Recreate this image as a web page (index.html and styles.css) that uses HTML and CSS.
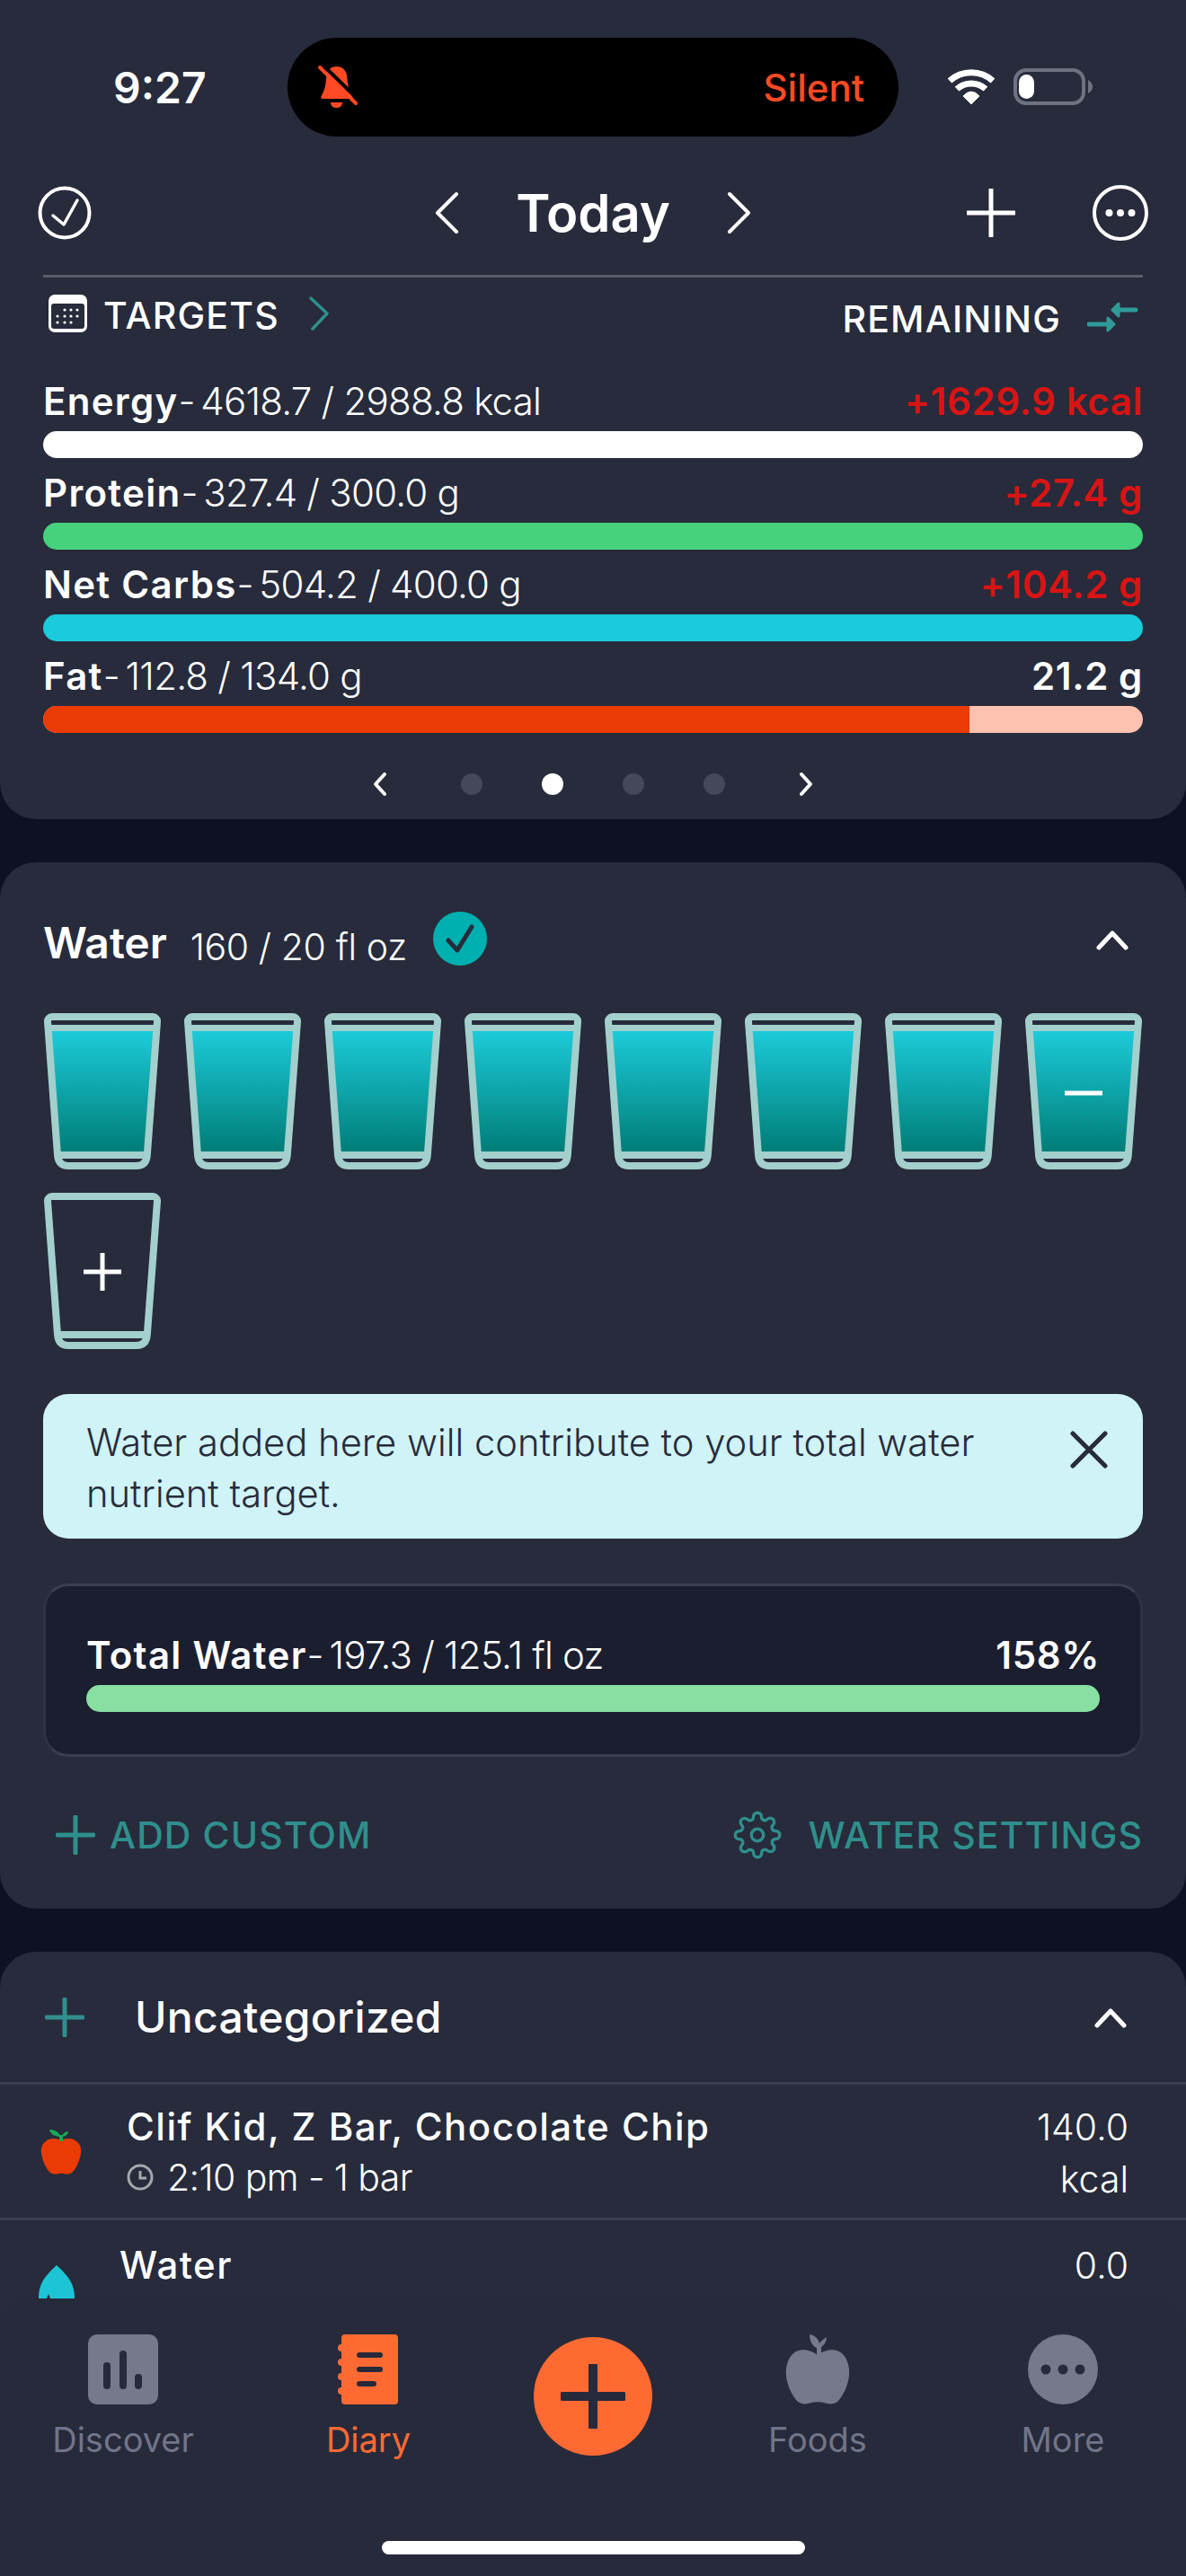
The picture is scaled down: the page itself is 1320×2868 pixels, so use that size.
FILE: index.html
```html
<!DOCTYPE html>
<html lang="en">
<head>
    <meta charset="UTF-8">
    <meta name="viewport" content="width=device-width, initial-scale=1.0">
    <title>Diary</title>
    <link rel="stylesheet" href="styles.css">
</head>
<body>
    <svg class="defs" width="0" height="0">
        <defs>
            <linearGradient id="water-fill" x1="0" y1="0" x2="0" y2="1">
                <stop offset="0" stop-color="#1ccbd9"/>
                <stop offset="1" stop-color="#007d78"/>
            </linearGradient>
            <symbol id="glass-empty" viewBox="0 0 130 174">
                <path d="M9 4H121a5 5 0 0 1 5 5.400L114.800 158q-.9 12-12 12H27q-11 0-12-12L4 9.400A5 5 0 0 1 9 4Z" fill="none" stroke="#a3cfcc" stroke-width="8" stroke-linejoin="round"/>
                <path d="M15 158H115" stroke="#a3cfcc" stroke-width="8"/>
            </symbol>
            <symbol id="glass-full" viewBox="0 0 130 174">
                <path d="M8 20H122L112 154H18Z" fill="url(#water-fill)"/>
                <path d="M5 16.500H125" stroke="#a3cfcc" stroke-width="7"/>
                <use href="#glass-empty" width="130" height="174"/>
            </symbol>
        </defs>
    </svg>

    <div class="phone">
        <section class="card card-targets">
            <div class="status-bar">
                <span class="clock">9:27</span>
                <div class="island">
                    <svg class="bell" width="46" height="48" viewBox="0 0 46 48">
                        <path d="M21.500 1c-6 0-10 4-11 10-1 8-1 15-6 23-1 2 0 3 2 3H37c2 0 3-1 2-3-5-8-5-15-6-23-1-6-5-10-11.500-10Z" fill="#ff4a23"/>
                        <path d="M15 41h13c0 4-3 6-6.500 6S15 45 15 41Z" fill="#ff4a23"/>
                        <path d="M6 -1 47 39" stroke="#000" stroke-width="4"/>
                        <path d="M3 2 43 42" stroke="#ff4a23" stroke-width="4" stroke-linecap="round"/>
                    </svg>
                    <span class="silent">Silent</span>
                </div>
                <div class="status-icons">
                    <svg width="56" height="40" viewBox="0 0 56 40">
                        <path d="M27 39 18 30Q27 20 36 30Z" fill="#fff" stroke="#fff" stroke-linejoin="round"/>
                        <path d="M11 22A24 24 0 0 1 43 22" fill="none" stroke="#fff" stroke-width="7"/>
                        <path d="M3 13A36 36 0 0 1 51 13" fill="none" stroke="#fff" stroke-width="7"/>
                    </svg>
                    <svg class="battery" width="88" height="42" viewBox="0 0 88 42">
                        <rect x="2" y="2" width="76" height="37" rx="12" fill="none" stroke="#6f7280" stroke-width="4"/>
                        <rect x="6" y="7" width="17" height="27" rx="8.500" fill="#fff"/>
                        <path d="M83 13q5 3 5 7.500t-5 7.500Z" fill="#6f7280"/>
                    </svg>
                </div>
            </div>

            <div class="day-nav">
                <svg class="day-done" width="60" height="60" viewBox="0 0 60 60">
                    <circle cx="30" cy="30" r="27.500" fill="none" stroke="#fff" stroke-width="4"/>
                    <path d="M17 33l12 10 15-27" fill="none" stroke="#fff" stroke-width="3.500" stroke-linecap="round" stroke-linejoin="round"/>
                </svg>
                <div class="day-picker">
                    <svg width="28" height="48" viewBox="0 0 28 48"><path d="M25 3 4 24l21 21" fill="none" stroke="#fff" stroke-width="4" stroke-linecap="round" stroke-linejoin="round"/></svg>
                    <h1>Today</h1>
                    <svg width="28" height="48" viewBox="0 0 28 48"><path d="M3 3l21 21L3 45" fill="none" stroke="#fff" stroke-width="4" stroke-linecap="round" stroke-linejoin="round"/></svg>
                </div>
                <div class="day-actions">
                    <svg width="54" height="54" viewBox="0 0 54 54"><path d="M27 1v52M1 27h52" stroke="#fff" stroke-width="5" stroke-linecap="round"/></svg>
                    <svg width="62" height="62" viewBox="0 0 62 62">
                        <circle cx="31" cy="31" r="29" fill="none" stroke="#fff" stroke-width="4"/>
                        <circle cx="18.500" cy="31" r="4" fill="#fff"/><circle cx="31" cy="31" r="4" fill="#fff"/><circle cx="43.500" cy="31" r="4" fill="#fff"/>
                    </svg>
                </div>
            </div>

            <div class="targets-head">
                <div class="targets-link">
                    <svg class="calendar" width="44" height="42" viewBox="0 0 44 42">
                        <rect width="43" height="42" rx="7" fill="#fff"/>
                        <rect x="3" y="10" width="37" height="28" rx="3" fill="#272b3b"/>
                        <g fill="#fff">
                            <circle cx="18" cy="17" r="1.600"/><circle cx="25" cy="17" r="1.600"/><circle cx="32" cy="17" r="1.600"/>
                            <circle cx="10" cy="24" r="1.600"/><circle cx="18" cy="24" r="1.600"/><circle cx="25" cy="24" r="1.600"/><circle cx="32" cy="24" r="1.600"/>
                            <circle cx="10" cy="31" r="1.600"/><circle cx="18" cy="31" r="1.600"/><circle cx="25" cy="31" r="1.600"/>
                        </g>
                    </svg>
                    <span class="caps-label">TARGETS</span>
                    <svg class="targets-chevron" width="24" height="38" viewBox="0 0 24 38"><path d="M3 2l18 17L5 36" fill="none" stroke="#2f8f8c" stroke-width="3.500" stroke-linecap="round" stroke-linejoin="round"/></svg>
                </div>
                <div class="remaining-link">
                    <span class="caps-label">REMAINING</span>
                    <svg class="swap" width="58" height="38" viewBox="0 0 58 38">
                        <path d="M54 11H35M2 27h20" stroke="#2f9b98" stroke-width="5" stroke-linecap="round"/>
                        <path d="M28 11 35 4v14ZM30 27 23 20v14Z" fill="#2f9b98" stroke="#2f9b98" stroke-width="3" stroke-linejoin="round"/>
                    </svg>
                </div>
            </div>

            <div class="macro">
                <div class="macro-head"><span><b>Energy</b><i>- </i>4618.7 / 2988.8 kcal</span><b class="over">+1629.9 kcal</b></div>
                <div class="bar bar-white"></div>
            </div>
            <div class="macro">
                <div class="macro-head"><span><b>Protein</b><i>- </i>327.4 / 300.0 g</span><b class="over">+27.4 g</b></div>
                <div class="bar bar-green"></div>
            </div>
            <div class="macro">
                <div class="macro-head"><span><b>Net Carbs</b><i>- </i>504.2 / 400.0 g</span><b class="over">+104.2 g</b></div>
                <div class="bar bar-cyan"></div>
            </div>
            <div class="macro">
                <div class="macro-head"><span><b>Fat</b><i>- </i>112.8 / 134.0 g</span><b>21.2 g</b></div>
                <div class="bar bar-peach"><div class="bar-part" style="width: 84.2%"></div></div>
            </div>

            <div class="pager">
                <svg width="18" height="28" viewBox="0 0 18 28"><path d="M14 3 4 14l10 11" fill="none" stroke="#fff" stroke-width="4" stroke-linecap="round" stroke-linejoin="round"/></svg>
                <span class="dot"></span>
                <span class="dot dot-on"></span>
                <span class="dot"></span>
                <span class="dot"></span>
                <svg width="18" height="28" viewBox="0 0 18 28"><path d="M4 3l10 11L4 25" fill="none" stroke="#fff" stroke-width="4" stroke-linecap="round" stroke-linejoin="round"/></svg>
            </div>
        </section>

        <section class="card card-water">
            <div class="water-head">
                <h2>Water</h2>
                <span class="water-amount">160 / 20 fl oz</span>
                <svg class="water-check" width="60" height="60" viewBox="0 0 60 60">
                    <circle cx="30" cy="30" r="30" fill="#00b0b0"/>
                    <path d="M17 32l10 11 16-26" fill="none" stroke="#272b3b" stroke-width="5" stroke-linecap="round" stroke-linejoin="round"/>
                </svg>
                <svg class="chevron-up" width="36" height="24" viewBox="0 0 36 24"><path d="M3 21 18 5l15 16" fill="none" stroke="#fff" stroke-width="5" stroke-linecap="round" stroke-linejoin="round"/></svg>
            </div>

            <div class="glasses">
                <svg class="glass"><use href="#glass-full"/></svg>
                <svg class="glass"><use href="#glass-full"/></svg>
                <svg class="glass"><use href="#glass-full"/></svg>
                <svg class="glass"><use href="#glass-full"/></svg>
                <svg class="glass"><use href="#glass-full"/></svg>
                <svg class="glass"><use href="#glass-full"/></svg>
                <svg class="glass"><use href="#glass-full"/></svg>
                <svg class="glass" viewBox="0 0 130 174"><use href="#glass-full" width="130" height="174"/><path d="M44 89H86" stroke="#fff" stroke-width="5"/></svg>
                <svg class="glass" viewBox="0 0 130 174"><use href="#glass-empty" width="130" height="174"/><path d="M44 88H86M65 67v42" stroke="#fff" stroke-width="5"/></svg>
            </div>

            <div class="banner">
                <p>Water added here will contribute to your total water nutrient target.</p>
                <svg width="42" height="42" viewBox="0 0 42 42"><path d="M3 3l36 36M39 3 3 39" stroke="#272b3b" stroke-width="5" stroke-linecap="round"/></svg>
            </div>

            <div class="total-box">
                <div class="macro-head"><span><b>Total Water</b><i>- </i>197.3 / 125.1 fl oz</span><b>158%</b></div>
                <div class="bar bar-mint"></div>
            </div>

            <div class="water-actions">
                <div class="action">
                    <svg width="44" height="44" viewBox="0 0 44 44"><path d="M22 2v40M2 22h40" stroke="#2f8f8c" stroke-width="5" stroke-linecap="round"/></svg>
                    <span>ADD CUSTOM</span>
                </div>
                <div class="action action-settings">
                    <svg width="54" height="54" viewBox="0 0 24 24" fill="none" stroke="#2f8f8c" stroke-width="1.500">
                        <circle cx="12" cy="12" r="3"/>
                        <path d="M19.4 15a1.65 1.65 0 0 0 .33 1.82l.06.06a2 2 0 0 1 0 2.83 2 2 0 0 1-2.83 0l-.06-.06a1.65 1.65 0 0 0-1.82-.33 1.65 1.65 0 0 0-1 1.51V21a2 2 0 0 1-2 2 2 2 0 0 1-2-2v-.09A1.65 1.65 0 0 0 9 19.4a1.65 1.65 0 0 0-1.82.33l-.06.06a2 2 0 0 1-2.83 0 2 2 0 0 1 0-2.83l.06-.06a1.65 1.65 0 0 0 .33-1.82 1.65 1.65 0 0 0-1.51-1H3a2 2 0 0 1-2-2 2 2 0 0 1 2-2h.09A1.65 1.65 0 0 0 4.600 9a1.65 1.65 0 0 0-.33-1.82l-.06-.06a2 2 0 0 1 0-2.83 2 2 0 0 1 2.83 0l.06.06a1.65 1.65 0 0 0 1.82.33H9a1.65 1.65 0 0 0 1-1.51V3a2 2 0 0 1 2-2 2 2 0 0 1 2 2v.09a1.65 1.65 0 0 0 1 1.51 1.65 1.65 0 0 0 1.82-.33l.06-.06a2 2 0 0 1 2.83 0 2 2 0 0 1 0 2.83l-.06.06a1.65 1.65 0 0 0-.33 1.82V9a1.65 1.65 0 0 0 1.51 1H21a2 2 0 0 1 2 2 2 2 0 0 1-2 2h-.09a1.65 1.65 0 0 0-1.51 1z"/>
                    </svg>
                    <span>WATER SETTINGS</span>
                </div>
            </div>
        </section>

        <section class="card card-diary">
            <div class="diary-head">
                <svg width="44" height="44" viewBox="0 0 44 44"><path d="M22 2v40M2 22h40" stroke="#2f8f8c" stroke-width="5" stroke-linecap="round"/></svg>
                <h2>Uncategorized</h2>
                <svg class="chevron-up" width="36" height="24" viewBox="0 0 36 24"><path d="M3 21 18 5l15 16" fill="none" stroke="#fff" stroke-width="5" stroke-linecap="round" stroke-linejoin="round"/></svg>
            </div>
            <div class="entry">
                <svg class="entry-icon" width="46" height="50" viewBox="0 0 46 50">
                    <path d="M23 12c-4-2-9-3-14-1C3 14 0 19 1 26c1 8 5 17 9 21 3 3 8 3 10 2 2-.7 4-.7 6 0 2 1 7 1 10-2 4-4 8-13 9-21 1-7-2-12-8-15-5-2-10-1-14 1Z" fill="#eb3b04"/>
                    <path d="M23 13V6" stroke="#18a957" stroke-width="4"/>
                    <path d="M23 8C20 2 15 0 10 0c1 5 6 8 13 8ZM23 8c2-4 5-6 8-6 0 3-3 6-8 6Z" fill="#18a957"/>
                </svg>
                <div class="entry-text">
                    <div class="entry-name">Clif Kid, Z Bar, Chocolate Chip</div>
                    <div class="entry-meta">
                        <svg width="30" height="30" viewBox="0 0 30 30"><circle cx="15" cy="15" r="13" fill="none" stroke="#a5a7ac" stroke-width="3"/><path d="M15 8v8h7" fill="none" stroke="#a5a7ac" stroke-width="3"/></svg>
                        <span>2:10 pm - 1 bar</span>
                    </div>
                </div>
                <div class="entry-cal">140.0<br>kcal</div>
            </div>
            <div class="entry entry-water">
                <svg class="entry-icon" width="42" height="56" viewBox="0 0 42 56">
                    <path d="M21 0C13 8 1 17 1 36c0 12 9 20 20 20s20-8 20-20C41 17 29 8 21 0Z" fill="#1cc4d6"/>
                    <path d="M10 37l2-5 2 5" fill="#272b3b"/>
                </svg>
                <div class="entry-text">
                    <div class="entry-name">Water</div>
                </div>
                <div class="entry-cal">0.0</div>
            </div>
        </section>

        <nav class="tabbar">
            <div class="tabs">
                <div class="tab">
                    <svg width="78" height="78" viewBox="0 0 78 78">
                        <rect width="78" height="78" rx="10" fill="#75798a"/>
                        <path d="M21 35v22M39 22v35M56 48v9" stroke="#272a3a" stroke-width="8" stroke-linecap="round"/>
                    </svg>
                    <span>Discover</span>
                </div>
                <div class="tab tab-on">
                    <svg width="68" height="78" viewBox="0 0 68 78">
                        <path d="M4 4a4 4 0 0 1 4-4h55a4 4 0 0 1 4 4v70a4 4 0 0 1-4 4H8a4 4 0 0 1-4-4Z" fill="#ff6a33"/>
                        <circle cx="4" cy="15" r="4" fill="#ff6a33"/><circle cx="4" cy="31" r="4" fill="#ff6a33"/><circle cx="4" cy="47" r="4" fill="#ff6a33"/><circle cx="4" cy="63" r="4" fill="#ff6a33"/>
                        <path d="M24 23h23M24 39h23M24 55h16" stroke="#272a3a" stroke-width="6" stroke-linecap="round"/>
                    </svg>
                    <span>Diary</span>
                </div>
                <div class="tab">
                    <div class="fab">
                        <svg width="72" height="72" viewBox="0 0 72 72"><path d="M36 2v68M2 36h68" stroke="#272a3a" stroke-width="10" stroke-linecap="round"/></svg>
                    </div>
                </div>
                <div class="tab">
                    <svg width="72" height="78" viewBox="0 0 72 78">
                        <path d="M36 23c-6-5-16-8-24-4C3 24 0 36 1 46c1 11 7 23 13 29 4 3 10 3 15 1 4-1 10-1 14 0 5 2 11 2 15-1 6-6 12-18 13-29 1-10-2-22-11-27-8-4-18-1-24 4Z" fill="#75798a"/>
                        <path d="M27 0c6 1 10 5 11 10 2-3 5-5 8-7 0 5-3 9-6 11v10h-5V15C30 13 27 7 27 0Z" fill="#75798a"/>
                    </svg>
                    <span>Foods</span>
                </div>
                <div class="tab">
                    <svg width="78" height="78" viewBox="0 0 78 78">
                        <circle cx="39" cy="39" r="39" fill="#75798a"/>
                        <circle cx="20" cy="39" r="5.500" fill="#272a3a"/><circle cx="39" cy="39" r="5.500" fill="#272a3a"/><circle cx="58" cy="39" r="5.500" fill="#272a3a"/>
                    </svg>
                    <span>More</span>
                </div>
            </div>
            <div class="home-bar"></div>
        </nav>
    </div>
</body>
</html>
```

FILE: styles.css
```css
* {
    box-sizing: border-box;
}
body {
    margin: 0;
    font-family: "Inter", "Noto Sans", sans-serif;
    color: #fff;
    background-color: #0e1124;
}
h1, h2, p {
    margin: 0;
}
svg {
    display: block;
    flex: none;
}
.defs {
    position: absolute;
}
.phone {
    position: relative;
    width: 1320px;
    height: 2868px;
    overflow: hidden;
    background: #0e1124;
}
.card {
    background-color: #272b3b;
    padding: 0 48px;
}

/* top card */
.card-targets {
    height: 912px;
    border-radius: 0 0 40px 40px;
}
.status-bar {
    height: 152px;
    padding-top: 42px;
    display: flex;
    align-items: center;
}
.clock {
    width: 272px;
    padding-left: 78px;
    font-size: 48px;
    font-weight: 600;
}
.island {
    width: 680px;
    height: 110px;
    border-radius: 55px;
    background: #000;
    display: flex;
    align-items: center;
    justify-content: space-between;
    padding: 0 38px 0 33px;
}
.silent {
    color: #ff4a23;
    font-size: 42px;
    font-weight: 500;
}
.status-icons {
    display: flex;
    align-items: center;
    gap: 18px;
    margin-left: 54px;
}
.day-nav {
    height: 157px;
    padding-top: 16px;
    display: grid;
    grid-template-columns: 1fr auto 1fr;
    align-items: center;
    border-bottom: 3px solid #5a5d6b;
}
.day-done {
    margin-left: -6px;
}
.day-picker {
    display: flex;
    align-items: center;
    gap: 63px;
}
.day-picker h1 {
    font-size: 58px;
    font-weight: 600;
    line-height: 60px;
}
.day-actions {
    display: flex;
    align-items: center;
    justify-content: flex-end;
    gap: 86px;
    margin-right: -6px;
}
.targets-head {
    height: 113px;
    display: flex;
    justify-content: space-between;
}
.targets-link {
    display: flex;
    align-items: center;
    gap: 17px;
    height: 60px;
    padding: 24px 0 0 6px;
}
.calendar {
    margin-top: -4px;
}
.targets-chevron {
    margin-left: 15px;
    margin-top: -4px;
}
.remaining-link {
    display: flex;
    align-items: center;
    gap: 29px;
    height: 64px;
    padding-top: 20px;
    margin-top: 4px;
}
.swap {
    margin-top: -4px;
    margin-right: 4px;
}
.caps-label {
    font-size: 41px;
    font-weight: 500;
    letter-spacing: 1.2px;
}
.macro {
    margin-bottom: 14px;
}
.macro-head {
    display: flex;
    justify-content: space-between;
    height: 50px;
    line-height: 50px;
    margin-bottom: 8px;
    font-size: 42px;
    font-weight: 300;
    letter-spacing: -0.75px;
    white-space: nowrap;
}
.macro-head b {
    font-weight: 600;
    letter-spacing: 1.3px;
}
.macro-head i {
    font-style: normal;
    word-spacing: -4.5px;
}
.macro-head > b {
    letter-spacing: 0.6px;
}
.over {
    color: #d81414;
}
.bar {
    height: 30px;
    border-radius: 15px;
    overflow: hidden;
}
.bar-white {
    background-color: #fff;
}
.bar-green {
    background-color: #46d27d;
}
.bar-cyan {
    background-color: #1bcadb;
}
.bar-peach {
    background-color: #ffc2b0;
}
.bar-part {
    height: 100%;
    background-color: #eb3b04;
}
.bar-mint {
    background-color: #87dfa2;
}
.pager {
    display: flex;
    align-items: center;
    justify-content: center;
    gap: 66px;
    height: 28px;
    margin-top: 43px;
}
.pager svg:first-child {
    margin-right: 15px;
}
.pager svg:last-child {
    margin-left: 15px;
}
.dot {
    width: 24px;
    height: 24px;
    border-radius: 50%;
    background-color: #454858;
}
.dot-on {
    background-color: #fff;
}

/* water card */
.card-water {
    height: 1165px;
    margin-top: 48px;
    border-radius: 40px;
    padding-top: 1px;
}
.water-head {
    height: 167px;
    display: flex;
    align-items: center;
    padding-top: 2px;
}
.water-head h2 {
    font-size: 48px;
    font-weight: 600;
    margin-top: 8px;
}
.water-amount {
    font-size: 41px;
    font-weight: 300;
    letter-spacing: -0.4px;
    margin-left: 26px;
    margin-top: 16px;
}
.water-check {
    margin-left: 29px;
    margin-top: -2px;
}
.chevron-up {
    margin-left: auto;
    margin-right: 16px;
}
.glasses {
    display: grid;
    grid-template-columns: repeat(8, 130px);
    column-gap: 26px;
    row-gap: 26px;
    padding-left: 1px;
}
.glass {
    width: 130px;
    height: 174px;
}
.banner {
    margin-top: 50px;
    height: 161px;
    border-radius: 28px;
    background-color: #cff3f7;
    color: #272b3b;
    display: flex;
    justify-content: space-between;
    padding: 26px 39px 0 48px;
}
.banner p {
    width: 1030px;
    font-size: 41.7px;
    font-weight: 300;
    line-height: 57px;
}
.banner svg {
    margin-top: 15px;
}
.total-box {
    margin-top: 50px;
    height: 193px;
    border-radius: 28px;
    background-color: #1b1e2e;
    border: 3px solid #2f3243;
    border-top-color: #3b3e4f;
    border-bottom-color: #3b3e4f;
    padding: 52px 45px 0;
}
.total-box .macro-head {
    margin-bottom: 8px;
}
.water-actions {
    display: flex;
    justify-content: space-between;
    margin-top: 60px;
}
.action {
    display: flex;
    align-items: center;
    gap: 16px;
    height: 54px;
    color: #2f8f8c;
    font-size: 41px;
    font-weight: 500;
    letter-spacing: 1.1px;
    padding-left: 14px;
}
.action-settings {
    gap: 29px;
}

/* diary card */
.card-diary {
    margin-top: 48px;
    border-radius: 40px 40px 0 0;
    height: 700px;
    padding: 0;
}
.diary-head {
    height: 148px;
    display: flex;
    align-items: center;
    padding-left: 50px;
    border-bottom: 3px solid #3b3e4f;
}
.diary-head h2 {
    font-size: 48px;
    font-weight: 500;
    letter-spacing: 0.3px;
    margin-left: 56px;
}
.diary-head .chevron-up {
    margin-right: 66px;
}
.entry {
    height: 151px;
    display: flex;
    padding: 22px 64px 0 45px;
    border-bottom: 3px solid #3b3e4f;
}
.entry-icon {
    margin-top: 28px;
}
.entry-text {
    margin-left: 50px;
    flex: 1;
}
.entry-name {
    font-size: 42px;
    font-weight: 500;
    letter-spacing: 1.5px;
    line-height: 50px;
}
.entry-meta {
    display: flex;
    align-items: center;
    gap: 15px;
    font-size: 41px;
    font-weight: 300;
    letter-spacing: -0.6px;
    line-height: 58px;
    margin-top: 2px;
}
.entry-cal {
    font-size: 41px;
    font-weight: 300;
    line-height: 58px;
    margin-top: -4px;
    text-align: right;
}
.entry-water {
    border-bottom: 0;
    padding-top: 25px;
    padding-left: 42px;
}
.entry-water .entry-icon {
    margin-top: 25px;
}
.entry-water .entry-text {
    margin-left: 49px;
}

/* bottom bar */
.tabbar {
    position: absolute;
    left: 0;
    right: 0;
    bottom: 0;
    height: 309px;
    padding-top: 40px;
    border-radius: 40px 40px 0 0;
    background-color: #272a3a;
}
.tabs {
    display: grid;
    grid-template-columns: 274px 272px 228px 272px 274px;
    height: 230px;
}
.tab {
    display: flex;
    flex-direction: column;
    align-items: center;
    gap: 17px;
    color: #71758a;
    font-size: 38px;
    font-weight: 400;
    line-height: 44px;
}
.tab-on {
    color: #ff6a33;
}
.fab {
    width: 132px;
    height: 132px;
    margin-top: 3px;
    border-radius: 50%;
    background-color: #ff6a33;
    display: flex;
    align-items: center;
    justify-content: center;
}
.home-bar {
    width: 471px;
    height: 15px;
    margin: 0 auto;
    border-radius: 8px;
    background-color: #fff;
}
```
